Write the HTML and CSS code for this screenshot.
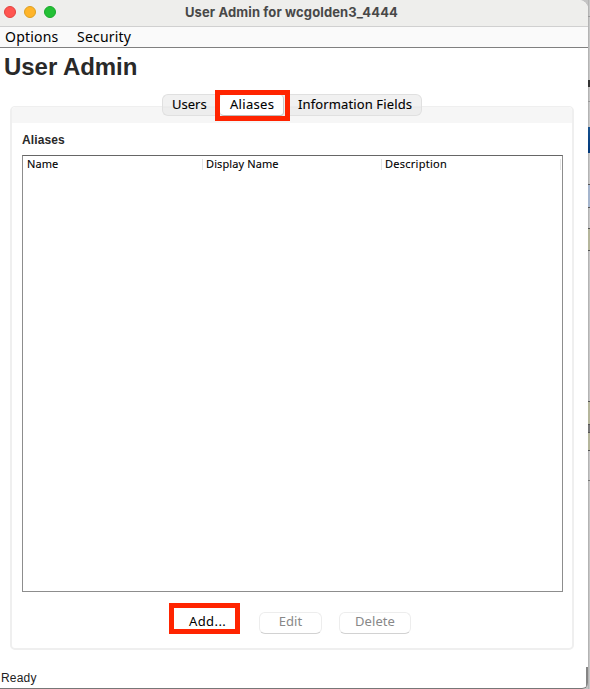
FILE: index.html
```html
<!DOCTYPE html>
<html lang="en">
<head>
<meta charset="utf-8">
<title>User Admin for wcgolden3_4444</title>
<link rel="stylesheet" href="styles.css">
</head>
<body>
<div class="desktop">
  <main class="window">
    <header class="titlebar">
      <div class="lights"><i class="light close"></i><i class="light minimize"></i><i class="light maximize"></i></div>
      <span class="title">User Admin for wcgolden3_4444</span>
    </header>
    <nav class="menubar"><span class="options">Options</span><span class="security">Security</span></nav>
    <h1>User Admin</h1>
    <section class="panel">
      <div class="tabs">
        <span class="tab users">Users</span>
        <span class="tab selected"><span>Aliases</span></span>
        <span class="tab info">Information Fields</span>
      </div>
      <div class="content">
        <h2>Aliases</h2>
        <div class="table">
          <div class="columns"><span class="c-name">Name</span><span class="c-display">Display Name</span><span class="c-desc">Description</span></div>
        </div>
        <div class="actions">
          <button class="add"><span>Add...</span></button>
          <button class="edit" disabled><span>Edit</span></button>
          <button class="delete" disabled><span>Delete</span></button>
        </div>
      </div>
    </section>
    <footer><span>Ready</span></footer>
  </main>
  <aside class="behind">
    <i class="gap g1"></i><i class="rule"></i><i class="gap g2"></i><i class="letter"></i><i class="gap g3"></i><i class="rule"></i><i class="gap g4"></i><i class="navy"></i><i class="gap g5"></i><i class="blue"></i><i class="gap g6"></i><i class="olive first"></i><i class="gap g7"></i><i class="olive second"></i><i class="slate"></i><i class="olive third"></i><i class="gap g8"></i><i class="rule dark"></i>
  </aside>
</div>
</body>
</html>
```

FILE: styles.css
```css
* { box-sizing: border-box; }
body { margin: 0; color: #111; font-family: "Noto Sans", sans-serif; }
.desktop { display: flex; width: 590px; height: 689px; overflow: hidden; background: #c4c4c4; }
.window { position: relative; display: flex; flex-direction: column; width: 588px; height: 689px; background: #fff; border-bottom: 1px solid #777; border-radius: 0 9px 6px 0; overflow: hidden; }
.titlebar { position: relative; height: 27px; flex: none; background: #eeeeec; border-bottom: 1px solid #d0d0d0; text-align: center; }
.lights { position: absolute; left: 4px; top: 6px; display: flex; gap: 8px; }
.light { width: 12px; height: 12px; border-radius: 50%; border: 1px solid; }
.close { background: #ff5550; border-color: #e3423e; }
.minimize { background: #ffb429; border-color: #dda020; }
.maximize { background: #23c035; border-color: #19a92b; }
.title { display: block; padding-right: 5px; font: bold 13px/24px Inter, sans-serif; letter-spacing: .12px; color: #484848; }
.menubar { display: flex; height: 21px; flex: none; padding-left: 5px; background: #fafafa; border-bottom: 1px solid #808080; font-size: 14px; line-height: 20px; letter-spacing: .2px; color: #000; }
.options { width: 72px; }
h1 { margin: 3px 0 0 4px; font: bold 24px/31px "Liberation Sans", sans-serif; letter-spacing: -.05px; color: #292929; height: 31px; flex: none; white-space: nowrap; }
.panel { display: flex; flex-direction: column; margin: 24px 0 0 10px; width: 564px; height: 544px; flex: none; border: 1px solid #efefef; border-width: 1px 2px 2px; border-radius: 5px; background: #fff; }
.tabs { display: flex; height: 16px; flex: none; padding-left: 150px; background: #f6f6f6; border-radius: 4px 4px 0 0; }
.tab { height: 22px; margin-top: -13px; background: linear-gradient(#f1f1f1 0 11px, #e7e7e7 12px, #ededed 13px); border: 1px solid #e0e0e0; font-size: 13px; line-height: 19px; white-space: nowrap; color: #000; -webkit-text-stroke: .1px; }
.users { width: 53px; padding-left: 9px; border-radius: 6px 0 0 6px; border-right: 0; }
.selected { position: relative; z-index: 1; width: 75px; height: 31px; margin-top: -17px; border: 5px solid #ff2400; background: #eee; letter-spacing: .3px; }
.selected span { display: block; width: 64px; height: 21px; padding-left: 10px; background: #fff; border-right: 1px solid #c8c8c8; border-bottom: 1px solid #bbb; border-radius: 4px; line-height: 19px; }
.info { width: 132px; padding-left: 8px; border-left: 0; border-radius: 0 6px 6px 0; letter-spacing: .12px; }
.content { display: flex; flex-direction: column; padding: 0 9px 0 10px; }
h2 { margin: 8px 0 0; height: 24px; font: bold 12px/19px "Liberation Sans", sans-serif; letter-spacing: .1px; color: #292929; }
.table { width: 541px; height: 437px; flex: none; border: 1px solid #8d8d8d; border-top-color: #666; }
.columns { display: flex; font-size: 11px; color: #000; -webkit-text-stroke: .1px; }
.columns span { height: 11px; margin-top: 3px; padding-left: 3px; line-height: 9px; width: 179px; border-right: 1px solid #e4e4e4; letter-spacing: .1px; }
.columns .c-name { width: 180px; padding-left: 4px; }
.columns .c-desc { letter-spacing: .25px; }
.actions { display: flex; margin-top: 11px; padding-left: 147px; }
button { height: 31px; padding: 8px 0 0; border: 0; background: none; font: 13px/17px "Noto Sans", sans-serif; letter-spacing: .1px; color: #888; flex: none; }
button span { display: block; height: 22px; background: #fff; border: 1px solid #ededed; border-bottom-color: #d2d2d2; border-radius: 6px; }
.add { width: 71px; padding: 0; border: 5px solid #ff2400; color: #000; letter-spacing: .4px; }
.add span { height: 21px; width: 61px; padding-left: 15px; border: 0; text-align: left; line-height: 27px; background: none; }
.edit { width: 63px; margin-left: 19px; }
.delete { width: 72px; margin-left: 17px; }
footer { margin-top: 19px; padding-left: 1px; font: 12px/19px "Liberation Sans", sans-serif; letter-spacing: .2px; color: #222; }
.window::after { content: ""; position: absolute; right: 0; bottom: 0; width: 2px; height: 21px; background: #858585; }
.behind { display: flex; flex-direction: column; width: 2px; background: linear-gradient(90deg, #aaa, #d0d0d0); }
.behind i { display: block; flex: none; width: 2px; }
.rule { height: 1px; background: #999; }
.dark { background: #777; }
.letter { height: 7px; background: #333; }
.navy { height: 26px; background: linear-gradient(#17528f, #003779); }
.blue { height: 24px; background: #a5b5cd; border: solid #555; border-width: 1px 0; }
.olive { background: #b5b69c; border: solid #555; border-width: 1px 0; }
.first { height: 23px; }
.second { height: 24px; }
.third { height: 19px; }
.slate { height: 7px; background: #777; }
.g1 { height: 16px; }
.g2 { height: 63px; }
.g3 { height: 14px; }
.g4 { height: 25px; }
.g5 { height: 31px; }
.g6 { height: 20px; }
.g7 { height: 150px; }
.g8 { height: 29px; }
```
